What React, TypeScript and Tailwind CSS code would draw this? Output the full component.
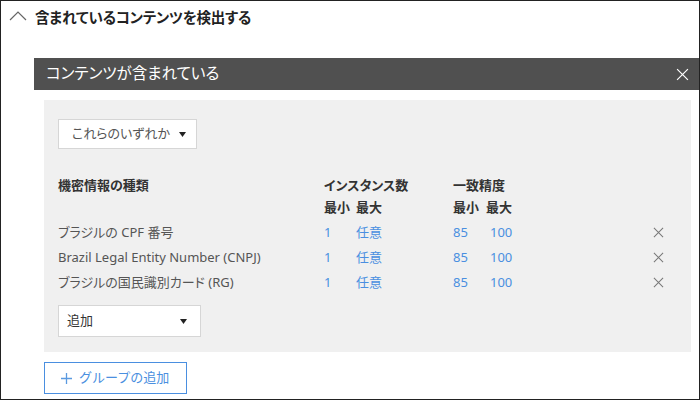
const rows = [
  "ブラジルの CPF 番号",
  "Brazil Legal Entity Number (CNPJ)",
  "ブラジルの国民識別カード (RG)",
];

function XIcon({ size, className }: { size: number; className?: string }) {
  return (
    <svg width={size} height={size} viewBox="0 0 12 12" className={className}>
      <path d="M1 1L11 11M11 1L1 11" stroke="currentColor" strokeWidth="1.1" fill="none" />
    </svg>
  );
}

function Caret() {
  return (
    <svg width="7" height="5" viewBox="0 0 7 5">
      <path d="M0 0H7L3.5 5Z" fill="#222" />
    </svg>
  );
}

export default function App() {
  return (
    <div className="w-[700px] h-[400px] overflow-hidden border border-[#222] bg-white font-['Noto_Sans','Noto_Sans_CJK_JP',sans-serif] [font-feature-settings:'palt'] text-[#333]">
      <div className="flex items-center h-[34px] pl-[8px]">
        <svg width="18" height="10" viewBox="0 0 18 10" className="mr-[8px] mt-[-4px]">
          <path d="M1 9L9 1L17 9" stroke="#666" strokeWidth="1.2" fill="none" />
        </svg>
        <span className="text-[14.5px] font-bold text-[#222] tracking-[-0.2px]">含まれているコンテンツを検出する</span>
      </div>

      <div className="ml-[33px] mt-[23px]">
        <div className="flex items-center justify-between h-[32px] bg-[#505050] pl-[12px] pr-[10px]">
          <span className="text-[15.5px] text-white">コンテンツが含まれている</span>
          <XIcon size={13} className="text-white" />
        </div>

        <div className="ml-[10px] mr-[8px] mt-[10px] bg-[#f0f0f0] pl-[14px] pt-[19px] pb-[15px] h-[252px]">
          <div className="flex items-center justify-between w-[139px] h-[30px] bg-white border border-[#d6d6d6] pl-[13px] pr-[10px] text-[13px] text-[#555]">
            <span>これらのいずれか</span>
            <Caret />
          </div>

          <div className="mt-[27px] text-[13px]">
            <div className="flex font-bold text-[#333] h-[20px] items-center">
              <span className="w-[266px]">機密情報の種類</span>
              <span className="w-[129px]">インスタンス数</span>
              <span>一致精度</span>
            </div>
            <div className="flex font-bold text-[#333] h-[24px] items-center">
              <span className="w-[266px]" />
              <span className="w-[32px]">最小</span>
              <span className="w-[97px]">最大</span>
              <span className="w-[33px]">最小</span>
              <span>最大</span>
            </div>
            {rows.map((r) => (
              <div key={r} className="flex items-center h-[25px]">
                <span className="w-[266px] text-[#555]">{r}</span>
                <span className="w-[32px] text-[#4a8fe0]">1</span>
                <span className="w-[97px] text-[#4a8fe0]">任意</span>
                <span className="w-[37px] text-[#4a8fe0]">85</span>
                <span className="w-[163px] text-[#4a8fe0]">100</span>
                <XIcon size={11} className="text-[#777]" />
              </div>
            ))}
          </div>

          <div className="mt-[10px] flex items-center justify-between w-[143px] h-[32px] bg-white border border-[#d6d6d6] pl-[8px] pr-[13px] text-[13px] text-[#333]">
            <span>追加</span>
            <Caret />
          </div>
        </div>

        <div className="ml-[10px] mt-[10px] flex items-center w-[143px] h-[32px] border border-[#4a8fe0] pl-[16px] text-[13px] text-[#4a8fe0] [font-feature-settings:normal]">
          <svg width="11" height="11" viewBox="0 0 11 11" className="mr-[7px]">
            <path d="M5.5 0V11M0 5.5H11" stroke="#5b9ae0" strokeWidth="1.3" />
          </svg>
          <span>グループの追加</span>
        </div>
      </div>
    </div>
  );
}
